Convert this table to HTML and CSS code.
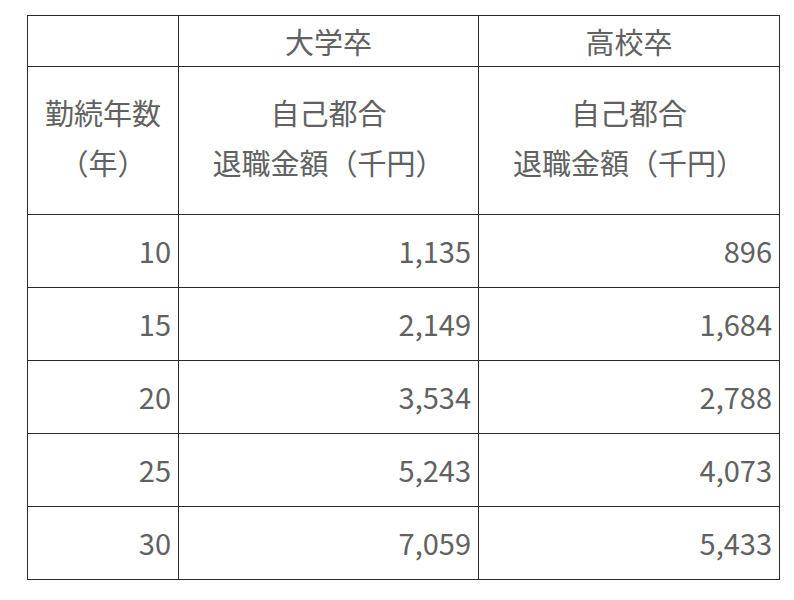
FILE: index.html
```html
<!DOCTYPE html>
<html lang="ja">
<head>
<meta charset="utf-8">
<link rel="stylesheet" href="styles.css">
</head>
<body>
<table class="tbl">
  <colgroup>
    <col class="c1">
    <col class="c2">
    <col class="c3">
  </colgroup>
  <tr class="r-head">
    <td></td>
    <td class="center">大学卒</td>
    <td class="center">高校卒</td>
  </tr>
  <tr class="r-sub">
    <td class="center">勤続年数<br>（年）</td>
    <td class="center">自己都合<br>退職金額（千円）</td>
    <td class="center">自己都合<br>退職金額（千円）</td>
  </tr>
  <tr class="r-num"><td>10</td><td>1,135</td><td>896</td></tr>
  <tr class="r-num"><td>15</td><td>2,149</td><td>1,684</td></tr>
  <tr class="r-num"><td>20</td><td>3,534</td><td>2,788</td></tr>
  <tr class="r-num"><td>25</td><td>5,243</td><td>4,073</td></tr>
  <tr class="r-num"><td>30</td><td>7,059</td><td>5,433</td></tr>
</table>
</body>
</html>
```
FILE: styles.css
```css
html, body {
  margin: 0;
  padding: 0;
  background: #ffffff;
}
body {
  padding: 15px 0 0 27px;
  font-family: "Noto Sans CJK JP", "Noto Sans", sans-serif;
  font-weight: 400;
  color: #616161;
}
.tbl {
  border-collapse: collapse;
  table-layout: fixed;
  width: 752px;
  font-size: 29px;
}
.c1 { width: 151px; }
.c2 { width: 300px; }
.c3 { width: 301px; }
.tbl td {
  border: 1px solid #2b2b2b;
  padding: 0 7px 0 0;
  text-align: right;
  vertical-align: middle;
  line-height: 50px;
}
.tbl td.center {
  text-align: center;
  padding: 0;
}
.r-head td {
  height: 50px;
  line-height: 50px;
}
.r-sub td {
  height: 139px;
  line-height: 50px;
}
.tbl .r-sub td.center {
  padding-bottom: 8px;
}
.r-num td {
  height: 70px;
  padding-bottom: 2px;
}
```
